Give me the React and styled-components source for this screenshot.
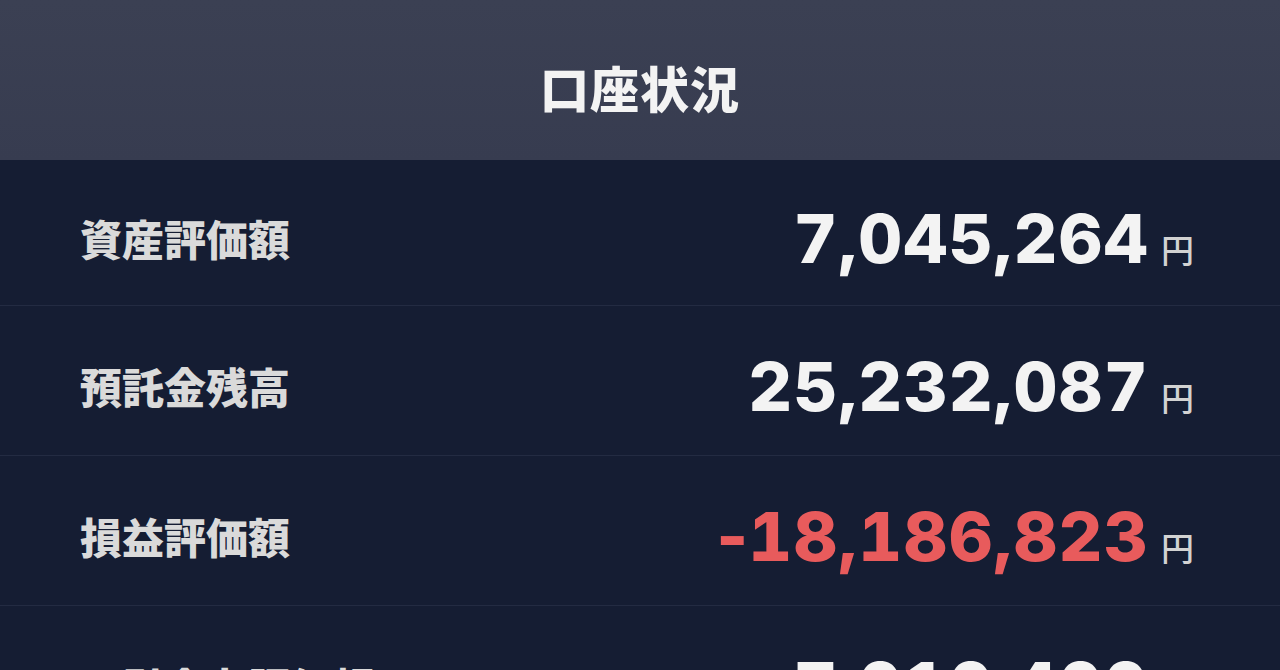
import React from "react";
import styled, { createGlobalStyle } from "styled-components";

const Global = createGlobalStyle`
  html, body { margin: 0; padding: 0; background: #151d33; }
  body { font-family: "Noto Sans CJK JP", "Noto Sans", sans-serif; }
  * { box-sizing: border-box; }
`;

const Screen = styled.div`
  width: 1280px;
  height: 670px;
  overflow: hidden;
  background: #151d33;
  display: flex;
  flex-direction: column;
`;

const Header = styled.header`
  height: 160px;
  flex: none;
  background: linear-gradient(180deg, #3b4053 0%, #373c50 100%);
  display: flex;
  align-items: center;
  justify-content: center;
  padding-top: 12px;
`;

const Title = styled.h1`
  margin: 0;
  font-family: "Noto Sans CJK JP", sans-serif;
  font-weight: 900;
  font-size: 49px;
  line-height: 1;
  color: #f3f3f3;
  letter-spacing: 1px;
`;

const List = styled.div`
  display: flex;
  flex-direction: column;
`;

const Row = styled.div`
  flex: none;
  height: 150px;
  border-bottom: 1px solid #232b42;
  display: flex;
  align-items: center;
  justify-content: space-between;
  padding: 10px 86px 0 80px;
  &:first-child {
    height: 146px;
  }
`;

const Label = styled.span`
  font-family: "Noto Sans CJK JP", sans-serif;
  font-weight: 900;
  font-size: 42px;
  color: #dadada;
  line-height: 1;
`;

const ValueBox = styled.div`
  display: flex;
  align-items: baseline;
  gap: 12px;
`;

const Amount = styled.span`
  font-family: Inter, "Liberation Sans", sans-serif;
  font-weight: 800;
  font-size: 68px;
  line-height: 1;
  letter-spacing: 1.3px;
  color: ${(p) => (p.$negative ? "#e85b5c" : "#f3f3f3")};
`;

const Digits = styled.span`
  font-variant-numeric: tabular-nums;
`;

const Sign = styled.span`
  letter-spacing: 0;
`;

const Unit = styled.span`
  font-family: "Noto Sans CJK JP", sans-serif;
  font-weight: 500;
  font-size: 33px;
  line-height: 1;
  color: #d2d2d2;
`;

const rows = [
  { label: "資産評価額", value: "7,045,264" },
  { label: "預託金残高", value: "25,232,087" },
  { label: "損益評価額", value: "-18,186,823", negative: true },
  { label: "取引余力評価額", value: "7,010,400" },
];

export default function App() {
  return (
    <>
      <Global />
      <Screen>
        <Header>
          <Title>口座状況</Title>
        </Header>
        <List>
          {rows.map((r) => {
            const neg = r.value.startsWith("-");
            const body = neg ? r.value.slice(1) : r.value;
            return (
              <Row key={r.label}>
                <Label>{r.label}</Label>
                <ValueBox>
                  <Amount $negative={r.negative}>
                    {neg && <Sign>-</Sign>}
                    <Digits>{body}</Digits>
                  </Amount>
                  <Unit>円</Unit>
                </ValueBox>
              </Row>
            );
          })}
        </List>
      </Screen>
    </>
  );
}
